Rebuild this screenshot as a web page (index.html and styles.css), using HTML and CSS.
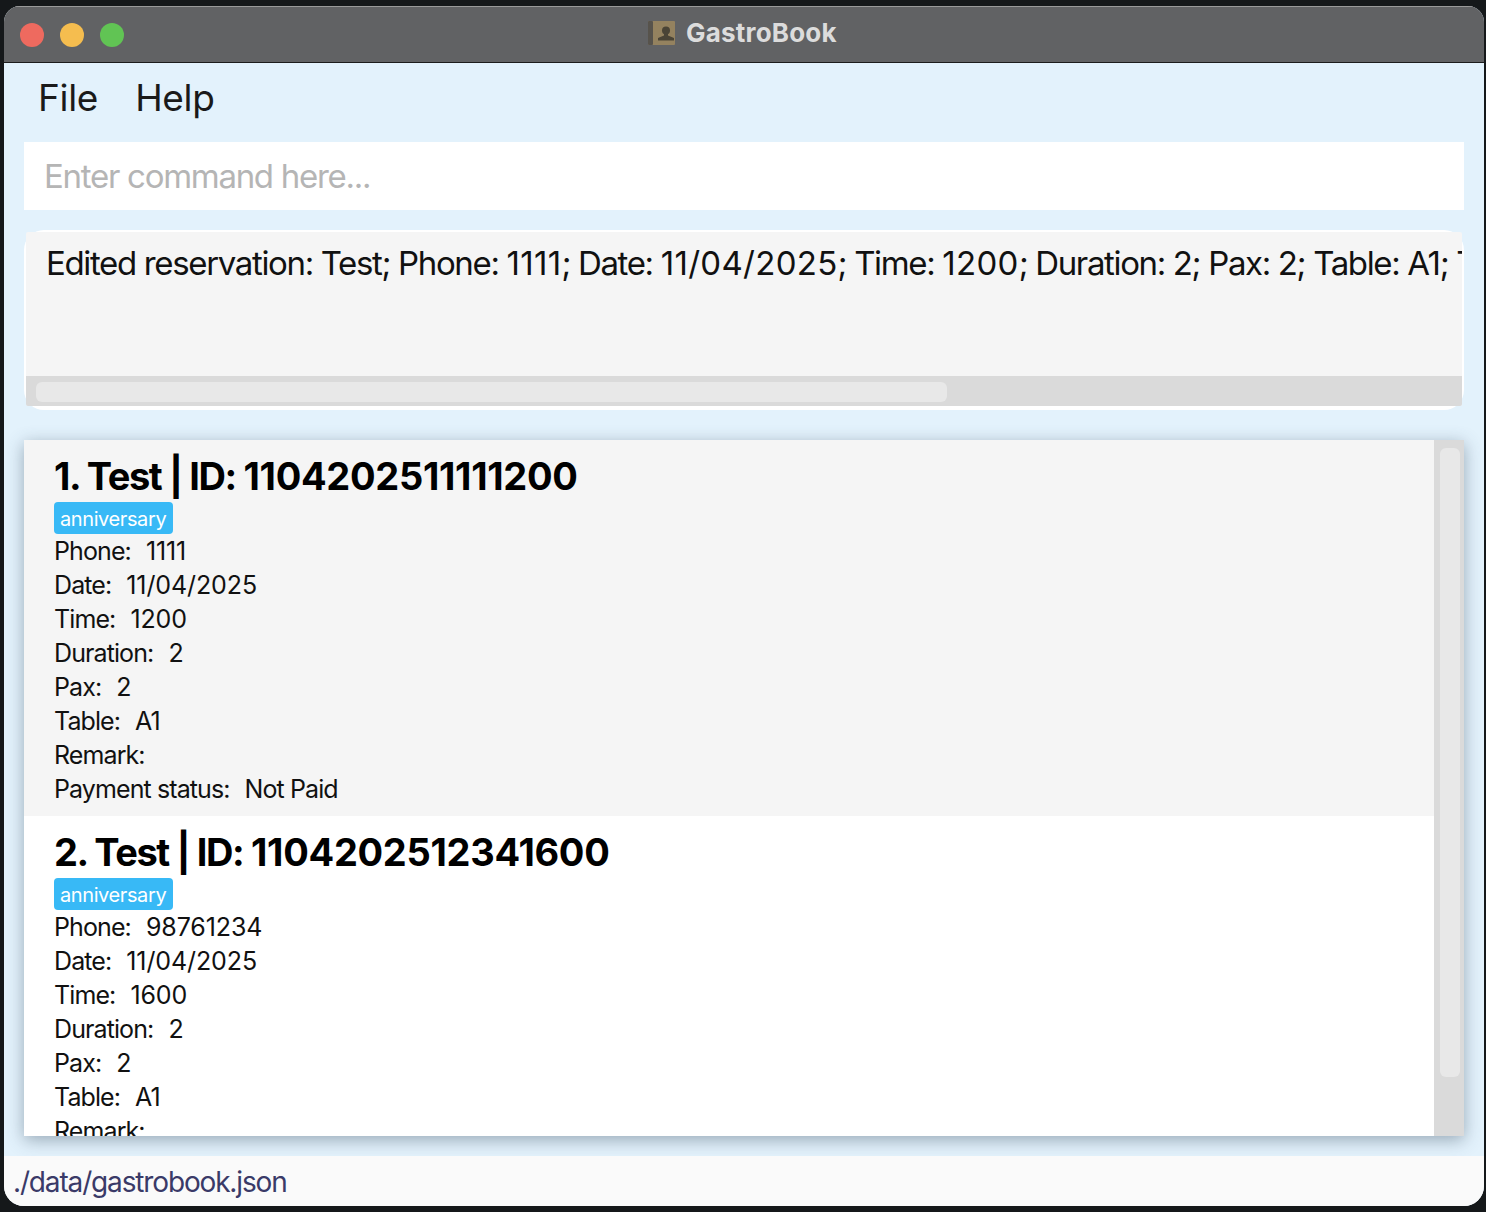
FILE: index.html
```html
<!DOCTYPE html>
<html lang="en">
<head>
    <meta charset="UTF-8">
    <title>GastroBook</title>
    <link rel="stylesheet" href="styles.css">
</head>
<body>
<div class="window">
    <div class="titlebar">
        <div class="lights">
            <span class="light red"></span>
            <span class="light yellow"></span>
            <span class="light green"></span>
        </div>
        <div class="title">
            <svg class="title-icon" width="28" height="26" viewBox="0 0 28 26">
                <rect x="0" y="1" width="27" height="24" rx="1" fill="#94825f"/>
                <rect x="0" y="1" width="5" height="24" rx="1" fill="#57534c"/>
                <circle cx="18" cy="10.500" r="4" fill="#4a4436"/>
                <path d="M16 13h4v2.500l6 2.500v2.500H10V18l6-2.500z" fill="#4a4436"/>
            </svg>
            <span>GastroBook</span>
        </div>
    </div>
    <div class="content">
        <div class="menu">
            <span>File</span>
            <span>Help</span>
        </div>
        <div class="command">Enter command here...</div>
        <div class="result">
            <div class="result-inner">
                <div class="result-text">Edited reservation: Test; Phone: <span class="num">1111</span>; Date: <span class="num">11/04/2025</span>; Time: <span class="num">1200</span>; Duration: 2; Pax: 2; Table: A1; Tags: [anniversary]</div>
                <div class="hbar"><div class="hthumb"></div></div>
            </div>
        </div>
        <div class="list">
            <div class="cards">
                <div class="card grey">
                    <div class="card-title">1. Test | ID: <span class="num">1104202511111200</span></div>
                    <span class="tag">anniversary</span>
                    <div class="row">Phone:<i></i><span class="num">1111</span></div>
                    <div class="row">Date:<i></i><span class="num">11/04/2025</span></div>
                    <div class="row">Time:<i></i><span class="num">1200</span></div>
                    <div class="row">Duration:<i></i>2</div>
                    <div class="row">Pax:<i></i>2</div>
                    <div class="row">Table:<i></i>A1</div>
                    <div class="row">Remark:<i></i></div>
                    <div class="row">Payment status:<i></i>Not Paid</div>
                </div>
                <div class="card">
                    <div class="card-title">2. Test | ID: <span class="num">1104202512341600</span></div>
                    <span class="tag">anniversary</span>
                    <div class="row">Phone:<i></i><span class="num">98761234</span></div>
                    <div class="row">Date:<i></i><span class="num">11/04/2025</span></div>
                    <div class="row">Time:<i></i><span class="num">1600</span></div>
                    <div class="row">Duration:<i></i>2</div>
                    <div class="row">Pax:<i></i>2</div>
                    <div class="row">Table:<i></i>A1</div>
                    <div class="row">Remark:<i></i></div>
                    <div class="row">Payment status:<i></i>Not Paid</div>
                </div>
            </div>
            <div class="vbar"><div class="vthumb"></div></div>
        </div>
    </div>
    <div class="status">./data/gastrobook.json</div>
</div>
</body>
</html>
```

FILE: styles.css
```css
* {
    box-sizing: border-box;
}

body {
    margin: 0;
    height: 1212px;
    padding: 6px 2px 6px 4px;
    overflow: hidden;
    background: #15181a;
    font-family: Inter, "Liberation Sans", sans-serif;
}

.window {
    height: 1200px;
    display: flex;
    flex-direction: column;
    overflow: hidden;
    border-radius: 16px 16px 20px 20px;
    background: #e3f2fc;
}

.titlebar {
    height: 57px;
    flex: none;
    position: relative;
    display: flex;
    align-items: center;
    padding-left: 16px;
    background: #616264;
    border-top: 1px solid #9a9a9a;
    border-bottom: 1px solid #1c1c1c;
}

.lights {
    display: flex;
    gap: 16px;
}

.light {
    width: 24px;
    height: 24px;
    border-radius: 50%;
}

.red {
    background: #ee6a5f;
}

.yellow {
    background: #f5bd4f;
}

.green {
    background: #61c454;
}

.title {
    position: absolute;
    left: 644px;
    top: 10px;
    display: flex;
    align-items: center;
    gap: 10px;
    font-size: 26px;
    font-weight: 700;
    letter-spacing: 0.2px;
    color: #dcdcdc;
}

.content {
    flex: 1;
    min-height: 0;
    display: flex;
    flex-direction: column;
    padding: 0 20px;
}

.menu {
    height: 79px;
    flex: none;
    display: flex;
    align-items: center;
    gap: 37px;
    padding: 0 0 10px 14px;
    font-size: 37px;
    letter-spacing: -0.3px;
    color: #1a1a1a;
}

.command {
    height: 68px;
    flex: none;
    padding-left: 20px;
    line-height: 68px;
    font-size: 33px;
    letter-spacing: -1.28px;
    color: #b5b5b5;
    background: #fff;
}

.result {
    height: 180px;
    flex: none;
    margin-top: 20px;
    padding: 2px 2px 4px;
    border-radius: 20px;
    background: #fff;
}

.result-inner {
    height: 100%;
    display: flex;
    flex-direction: column;
    overflow: hidden;
    border-radius: 2px;
    background: #f5f5f5;
}

.result-text {
    flex: 1;
    padding: 11px 0 0 20px;
    overflow: hidden;
    white-space: nowrap;
    font-size: 33px;
    letter-spacing: -1.35px;
    color: #111;
}

.result-text .num {
    letter-spacing: 0.3px;
}

.hbar {
    height: 30px;
    flex: none;
    padding: 6px 10px 4px;
    background: #dadada;
}

.hthumb {
    width: 911px;
    height: 20px;
    border-radius: 6px;
    background: #e8e8e8;
}

.list {
    height: 696px;
    flex: none;
    margin-top: 30px;
    display: flex;
    background: #fff;
    box-shadow: 0 4px 16px rgba(60, 80, 100, 0.45);
}

.cards {
    flex: 1;
    min-width: 0;
    overflow: hidden;
}

.card {
    height: 376px;
    padding: 11px 0 0 30px;
    background: #fff;
}

.card.grey {
    background: #f5f5f5;
}

.card-title {
    height: 51px;
    line-height: 50px;
    font-size: 38px;
    font-weight: 700;
    letter-spacing: -1.4px;
    color: #000;
}

.card-title .num {
    letter-spacing: -0.3px;
}

.tag {
    display: block;
    width: 119px;
    height: 32px;
    padding-left: 6px;
    line-height: 34px;
    border-radius: 4px;
    font-size: 20px;
    letter-spacing: -0.4px;
    color: #fff;
    background: #38b9f6;
}

.row {
    height: 34px;
    line-height: 34px;
    font-size: 25px;
    letter-spacing: -0.9px;
    color: #111;
}

.row .num {
    letter-spacing: -0.1px;
}

.row i {
    display: inline-block;
    width: 15px;
}

.vbar {
    width: 30px;
    flex: none;
    padding: 8px 4px 0 6px;
    background: #dadada;
}

.vthumb {
    height: 629px;
    border-radius: 6px;
    background: #e8e8e8;
}

.status {
    height: 50px;
    flex: none;
    margin-top: 20px;
    padding-left: 9px;
    line-height: 52px;
    font-size: 28px;
    letter-spacing: -1.15px;
    color: #3a3a68;
    background: #fafafa;
}
```
